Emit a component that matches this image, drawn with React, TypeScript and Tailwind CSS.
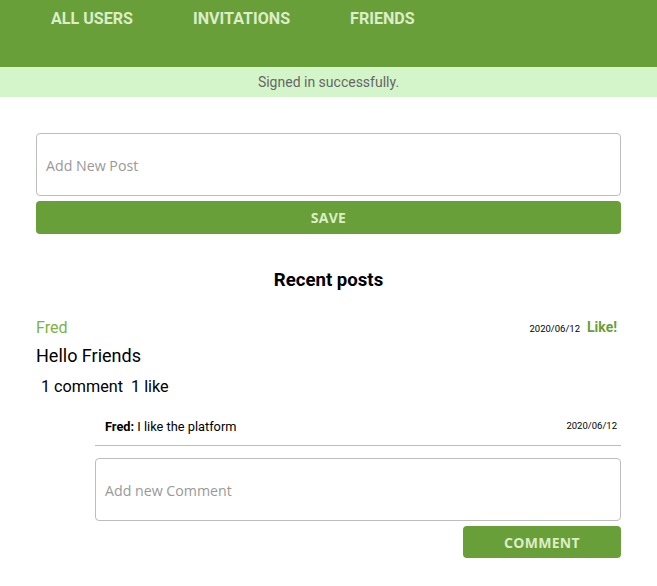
import React, { useState } from 'react';

const GREEN = 'bg-[#689f38]';

const App = () => {
    const [post, setPost] = useState('');
    const [comment, setComment] = useState('');

    return (
        <div className="min-h-[586px] bg-white font-['Roboto',sans-serif] text-black">
            {/* top nav */}
            <nav className={`${GREEN} h-[67px] flex items-start pl-[51px] pt-[8px] gap-[60px]`}>
                <a className="text-[16.1px] leading-[22px] font-bold text-[#dcedc8] uppercase">All Users</a>
                <a className="text-[16.1px] leading-[22px] font-bold text-[#dcedc8] uppercase">Invitations</a>
                <a className="text-[16.1px] leading-[22px] font-bold text-[#dcedc8] uppercase">Friends</a>
            </nav>

            <div className="h-[30px] bg-[#d4f5c9] flex items-center justify-center text-[14px] text-[#666]">
                Signed in successfully.
            </div>

            <main className="px-[36px] pt-[36px]">
                <textarea
                    value={post}
                    onChange={(e) => setPost(e.target.value)}
                    placeholder="Add New Post"
                    className="block w-full h-[63px] resize-none rounded-[4px] border border-[#bdbdbd] px-[9px] pt-[22px] font-['Open_Sans',sans-serif] text-[14.2px] leading-[20px] placeholder:text-[#999] outline-none"
                />
                <button className={`${GREEN} mt-[5px] w-full h-[33px] rounded-[4px] font-['Open_Sans',sans-serif] text-[14px] font-bold text-[#dcedc8] tracking-[0.3px]`}>
                    SAVE
                </button>

                <h2 className="mt-[34px] text-center text-[18.6px] font-bold leading-[24px]">Recent posts</h2>

                <div className="mt-[25px]">
                    <div className="flex items-center justify-between">
                        <span className="text-[16px] text-[#7cb342] leading-[20px]">Fred</span>
                        <div className="flex items-baseline gap-[7px] pr-[4px]">
                            <span className="text-[9.5px]">2020/06/12</span>
                            <span className="text-[14px] font-bold text-[#689f38]">Like!</span>
                        </div>
                    </div>
                    <p className="mt-[6px] text-[18px] leading-[24px]">Hello Friends</p>
                    <p className="mt-[9px] pl-[5px] text-[16.2px] leading-[20px] whitespace-pre">1 comment  1 like</p>

                    <div className="ml-[59px] mt-[14px]">
                        <div className="flex justify-between border-b border-[#bdbdbd] pl-[10px] pr-[4px] pb-[10px] pt-[8px]">
                            <span className="text-[12.8px] leading-[16px]">
                                <b>Fred:</b> I like the platform
                            </span>
                            <span className="text-[9.5px] leading-[14px]">2020/06/12</span>
                        </div>
                        <textarea
                            value={comment}
                            onChange={(e) => setComment(e.target.value)}
                            placeholder="Add new Comment"
                            className="mt-[12px] block w-full h-[63px] resize-none rounded-[4px] border border-[#bdbdbd] px-[9px] pt-[22px] font-['Open_Sans',sans-serif] text-[14.2px] leading-[20px] placeholder:text-[#999] outline-none"
                        />
                        <div className="flex justify-end mt-[5px]">
                            <button className={`${GREEN} w-[158px] h-[32px] rounded-[4px] font-['Open_Sans',sans-serif] text-[14px] font-bold text-[#dcedc8] tracking-[0.3px]`}>
                                COMMENT
                            </button>
                        </div>
                    </div>
                </div>
            </main>
        </div>
    );
};

export default App;
